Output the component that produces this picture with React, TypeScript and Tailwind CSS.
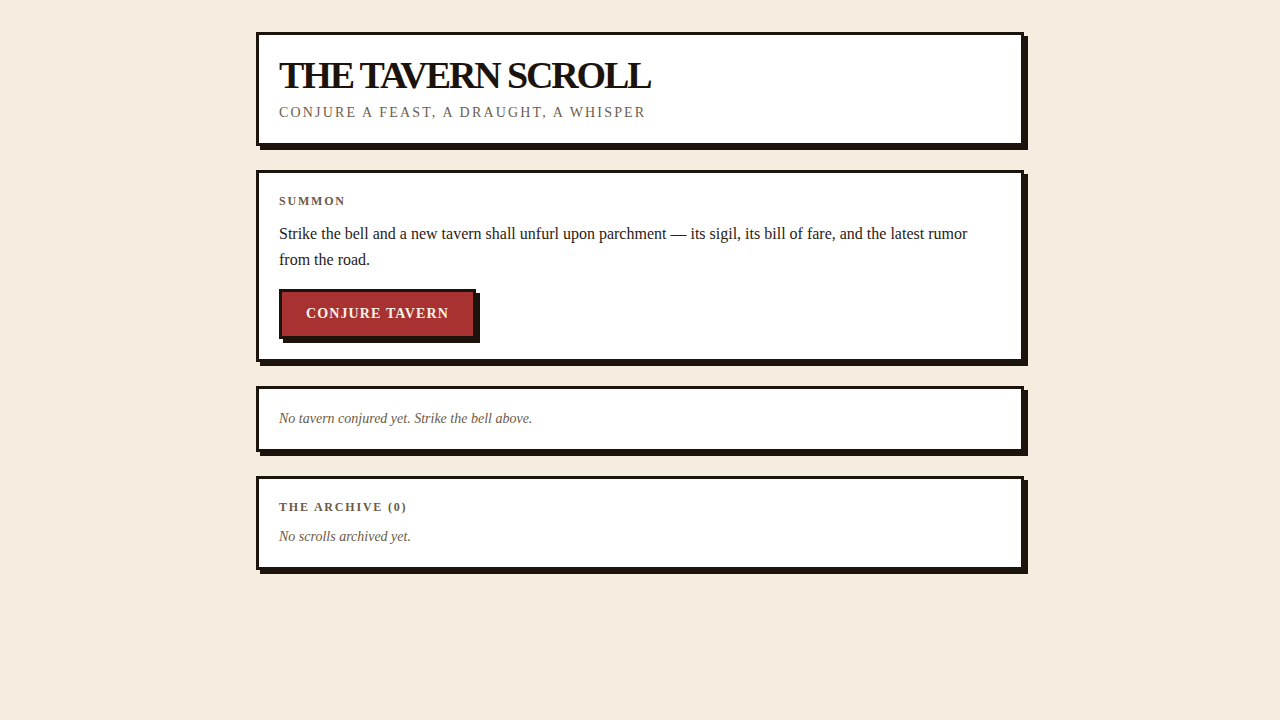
export default function App() {
  return (
    <div className="min-h-screen bg-[#f5eee0] font-['Liberation_Serif',_'Times_New_Roman',_serif] text-[#1c140c]">
      <div className="mx-auto flex w-[768px] flex-col gap-6 pt-8 pb-10">
        <section className="border-[3px] border-[#1c140c] bg-white px-5 py-5 shadow-[4px_4px_0_#1c140c]">
          <h1 className="text-[38px] leading-[1.1] font-bold tracking-[-0.056em] text-[#1c140c]">THE TAVERN SCROLL</h1>
          <p className="mt-1.5 text-[14px] leading-5 tracking-[0.155em] text-[#6b5d4f] uppercase">
            Conjure a feast, a draught, a whisper
          </p>
        </section>

        <section className="border-[3px] border-[#1c140c] bg-white px-5 py-5 shadow-[4px_4px_0_#1c140c]">
          <h2 className="text-[12px] leading-4 font-bold tracking-[0.15em] text-[#6b5a45] uppercase">Summon</h2>
          <p className="mt-3 text-[16px] leading-[26px] text-[#2a2118]">
            Strike the bell and a new tavern shall unfurl upon parchment — its sigil, its bill of fare, and the latest
            rumor from the road.
          </p>
          <button className="mt-4 border-[3px] border-[#1c140c] bg-[#a83232] px-6 py-3 text-[14px] leading-5 font-bold tracking-[0.08em] text-[#f8f1e4] uppercase shadow-[4px_4px_0_#1c140c]">
            Conjure Tavern
          </button>
        </section>

        <section className="border-[3px] border-[#1c140c] bg-white px-5 py-5 shadow-[4px_4px_0_#1c140c]">
          <p className="text-[14px] leading-5 text-[#6b5a45] italic">No tavern conjured yet. Strike the bell above.</p>
        </section>

        <section className="border-[3px] border-[#1c140c] bg-white px-5 py-5 shadow-[4px_4px_0_#1c140c]">
          <h2 className="text-[12px] leading-4 font-bold tracking-[0.15em] text-[#6b5a45] uppercase">The Archive (0)</h2>
          <p className="mt-3 text-[14px] leading-5 text-[#6b5a45] italic">No scrolls archived yet.</p>
        </section>
      </div>
    </div>
  );
}
